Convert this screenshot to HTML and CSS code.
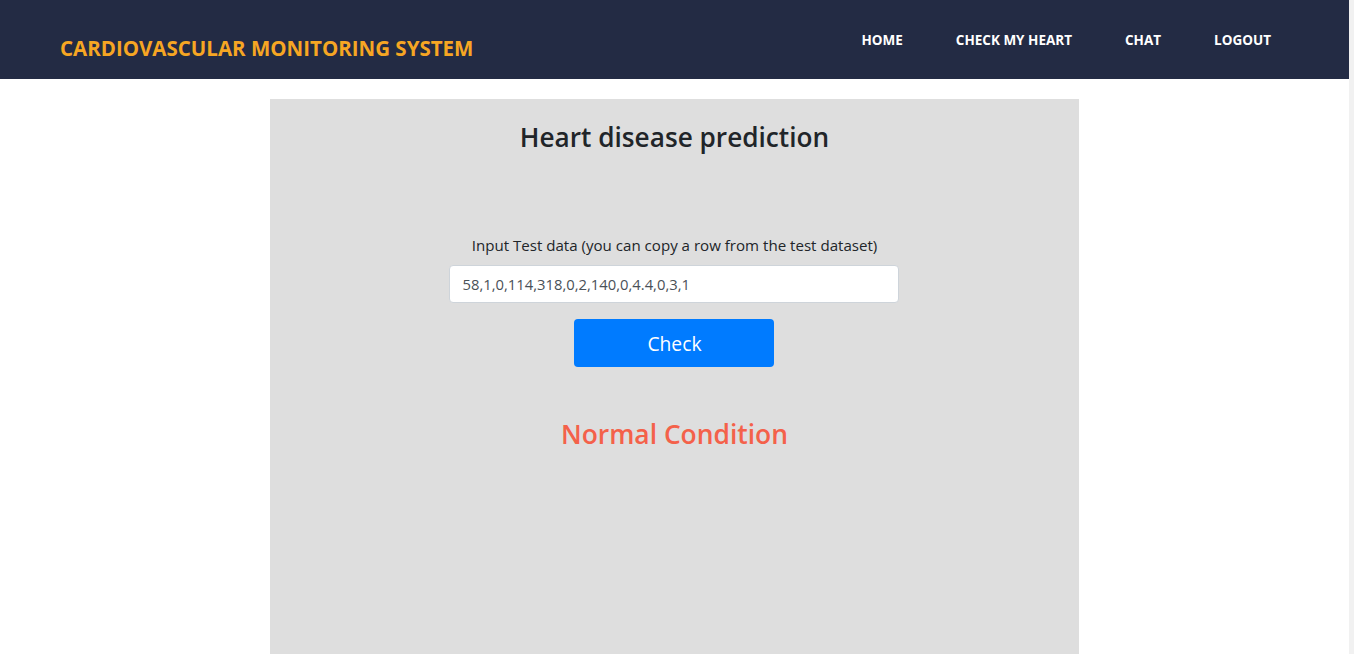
FILE: index.html
```html
<!DOCTYPE html>
<html lang="en">
<head>
<meta charset="utf-8">
<title>Cardiovascular Monitoring System</title>
<link rel="stylesheet" href="styles.css">
</head>
<body>
<header class="topbar">
  <div class="brand">CARDIOVASCULAR MONITORING SYSTEM</div>
  <nav class="nav">
    <a href="#" class="nav-link">HOME</a>
    <a href="#" class="nav-link">CHECK MY HEART</a>
    <a href="#" class="nav-link">CHAT</a>
    <a href="#" class="nav-link">LOGOUT</a>
  </nav>
</header>
<main class="page">
  <section class="panel">
    <h1 class="title">Heart disease prediction</h1>
    <form class="form">
      <label class="label" for="data">Input Test data (you can copy a row from the test dataset)</label>
      <input class="field" id="data" type="text" value="58,1,0,114,318,0,2,140,0,4.4,0,3,1">
      <button class="btn" type="button">Check</button>
    </form>
    <h2 class="result">Normal Condition</h2>
  </section>
</main>
</body>
</html>
```

FILE: styles.css
```css
html {
  background: #f1f1f1;
}
body {
  margin: 0 5px 0 0;
  font-family: "Segoe UI", "Open Sans", "Noto Sans", sans-serif;
  color: #212529;
  background: #fff;
}
.topbar {
  height: 79px;
  background: #232b44;
  display: flex;
  align-items: flex-start;
  justify-content: space-between;
  padding: 0 78px 0 60px;
}
.brand {
  margin-top: 34px;
  font-size: 20.5px;
  font-weight: 700;
  color: #f6a623;
}
.nav {
  display: flex;
  gap: 53px;
  margin-top: 31px;
}
.nav-link {
  color: #fff;
  font-size: 13.5px;
  font-weight: 700;
  text-decoration: none;
}
.page {
  padding-top: 20px;
}
.panel {
  width: 60%;
  margin: 0 auto;
  background: #dedede;
  min-height: 1650px;
  display: flex;
  flex-direction: column;
  align-items: center;
}
.title {
  margin: 18px 0 0;
  font-size: 26.2px;
  font-weight: 600;
  line-height: 40px;
}
.form {
  display: flex;
  flex-direction: column;
  align-items: center;
  margin-top: 76px;
}
.label {
  font-size: 15.1px;
  line-height: 24px;
  margin-bottom: 8px;
}
.field {
  box-sizing: border-box;
  width: 450px;
  height: 38px;
  padding: 6px 12px;
  border: 1px solid #ced4da;
  border-radius: 4px;
  font-family: inherit;
  font-size: 14.8px;
  color: #495057;
  background: #fff;
}
.btn {
  margin-top: 16px;
  width: 200px;
  height: 48px;
  background: #007bff;
  color: #fff;
  border: none;
  border-radius: 4px;
  font-family: inherit;
  font-size: 19.3px;
}
.result {
  margin: 49px 0 0;
  font-size: 26.4px;
  font-weight: 600;
  color: #f4614a;
}
```
